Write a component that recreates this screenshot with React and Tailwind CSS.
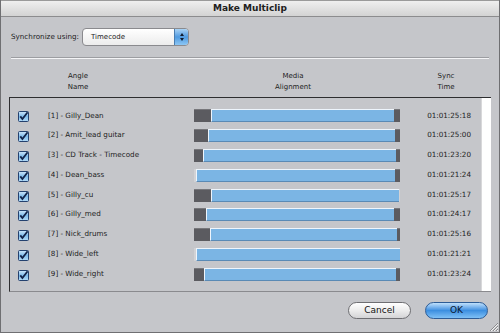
import React from "react";

const rows = [
  { name: "[1] - Gilly_Dean", l: 17, r: 6, time: "01:01:25:18" },
  { name: "[2] - Amit_lead guitar", l: 14, r: 5, time: "01:01:25:00" },
  { name: "[3] - CD Track - Timecode", l: 9, r: 4, time: "01:01:23:20" },
  { name: "[4] - Dean_bass", l: 2, r: 5, time: "01:01:21:24" },
  { name: "[5] - Gilly_cu", l: 17, r: 1, time: "01:01:25:17" },
  { name: "[6] - Gilly_med", l: 12, r: 6, time: "01:01:24:17" },
  { name: "[7] - Nick_drums", l: 16, r: 3, time: "01:01:25:16" },
  { name: "[8] - Wide_left", l: 2, r: 0, time: "01:01:21:21" },
  { name: "[9] - Wide_right", l: 10, r: 4, time: "01:01:23:24" },
];

function Check() {
  return (
    <svg width="11" height="11" viewBox="0 0 11 11" className="shrink-0">
      <defs>
        <linearGradient id="cb" x1="0" y1="0" x2="0" y2="1">
          <stop offset="0" stopColor="#cfe6fa" />
          <stop offset="0.5" stopColor="#7fbcec" />
          <stop offset="1" stopColor="#b6dcf8" />
        </linearGradient>
      </defs>
      <rect x="0.5" y="0.5" width="10" height="10" rx="1" fill="url(#cb)" stroke="#24416e" />
      <path d="M2.3 5.4 L4.4 8 L9.6 1.2" fill="none" stroke="#13244a" strokeWidth="1.8" />
    </svg>
  );
}

function Bar({ l, r }) {
  return (
    <div className="flex w-[206px] h-[13px] bg-[#b9b9bd] shrink-0">
      <div
        className={l > 2 ? "bg-[#5b5b60] border-t border-[#77777b]" : "bg-[#d2d2d5]"}
        style={{ width: l }}
      />
      <div className="flex-1 bg-[#7bb5e4] border-t border-l border-[#eef5fc] border-b-[#5a8ab5] border-b" />
      {r > 0 && (
        <div
          className={r > 1 ? "bg-[#5b5b60] border-t border-[#77777b]" : "bg-[#d2d2d5]"}
          style={{ width: r }}
        />
      )}
    </div>
  );
}

export default function App() {
  return (
    <div className="relative w-[500px] h-[333px] bg-[#c5c6ca] border-x border-b border-[#6f6f72] flex flex-col font-['DejaVu_Sans',sans-serif] text-[#1c1c1c] overflow-hidden">
      <div className="h-[17px] shrink-0 bg-gradient-to-b from-[#efefef] to-[#d3d3d3] border-b border-[#8c8c8e] border-t border-t-[#9a9a9a] flex items-center justify-center">
        <span className="text-[9px] font-bold leading-none text-[#202020]">Make Multiclip</span>
      </div>

      <div className="flex items-center mt-[11px] ml-[10px]">
        <span className="text-[7.2px] w-[71px]">Synchronize using:</span>
        <div className="flex w-[107px] h-[18px] rounded-[4px] border border-[#8a8a8e] bg-gradient-to-b from-[#ffffff] to-[#ececec] overflow-hidden">
          <span className="flex-1 text-[7px] pl-[8px] flex items-center">Timecode</span>
          <div className="w-[14px] bg-gradient-to-b from-[#a9d3f5] via-[#4f9ae0] to-[#8cc6f4] border-l border-[#4a7db0] flex flex-col items-center justify-center gap-[2px]">
            <div className="w-0 h-0 border-x-[2.5px] border-x-transparent border-b-[3px] border-b-[#101c30]" />
            <div className="w-0 h-0 border-x-[2.5px] border-x-transparent border-t-[3px] border-t-[#101c30]" />
          </div>
        </div>
      </div>

      <div className="mt-[11px] mx-[10px]">
        <div className="h-px bg-[#9c9da1]" />
        <div className="h-px bg-[#f4f4f6]" />
      </div>

      <div className="flex mt-[12px] text-[7px] leading-[11px] text-center">
        <div className="w-[154px]">
          <div>Angle</div>
          <div>Name</div>
        </div>
        <div className="w-[276px]">
          <div>Media</div>
          <div>Alignment</div>
        </div>
        <div className="w-[30px]">
          <div>Sync</div>
          <div>Time</div>
        </div>
      </div>

      <div className="flex ml-[8px] w-[482px] h-[195px] mt-[4px] border-t border-l border-[#2e2e30] border-b border-b-[#8a8a8e]">
        <div className="flex-1 pt-[8px]">
          {rows.map((row) => (
            <div key={row.name} className="flex items-center h-[19.8px]">
              <div className="ml-[8px] mt-[2px]">
                <Check />
              </div>
              <span className="ml-[19px] w-[146px] text-[7.2px] whitespace-nowrap">{row.name}</span>
              <Bar l={row.l} r={row.r} />
              <span className="w-[71px] text-right text-[7.2px]">{row.time}</span>
            </div>
          ))}
        </div>
        <div className="w-[10px] bg-white border-l border-[#d8d8da]" />
      </div>

      <div className="flex justify-end gap-[14px] mt-[10px] mr-[11px]">
        <button className="w-[63px] h-[17px] rounded-full border border-[#6e6e72] bg-gradient-to-b from-[#ffffff] via-[#ececec] to-[#d4d4d6] text-[9px] leading-none text-[#111]">
          Cancel
        </button>
        <button className="w-[63px] h-[17px] rounded-full border border-[#2d5c96] bg-gradient-to-b from-[#bfe0fb] via-[#3c8fe0] to-[#7ec0f6] text-[9px] leading-none text-[#0b1a30]">
          OK
        </button>
      </div>

      <svg className="absolute right-0 bottom-0" width="12" height="12" viewBox="0 0 12 12">
        <path d="M11 3 L3 11 M11 6 L6 11 M11 9 L9 11" stroke="#8a8a8e" strokeWidth="1" />
        <path d="M11 4 L4 11 M11 7 L7 11 M11 10 L10 11" stroke="#f2f2f2" strokeWidth="1" />
      </svg>
    </div>
  );
}
